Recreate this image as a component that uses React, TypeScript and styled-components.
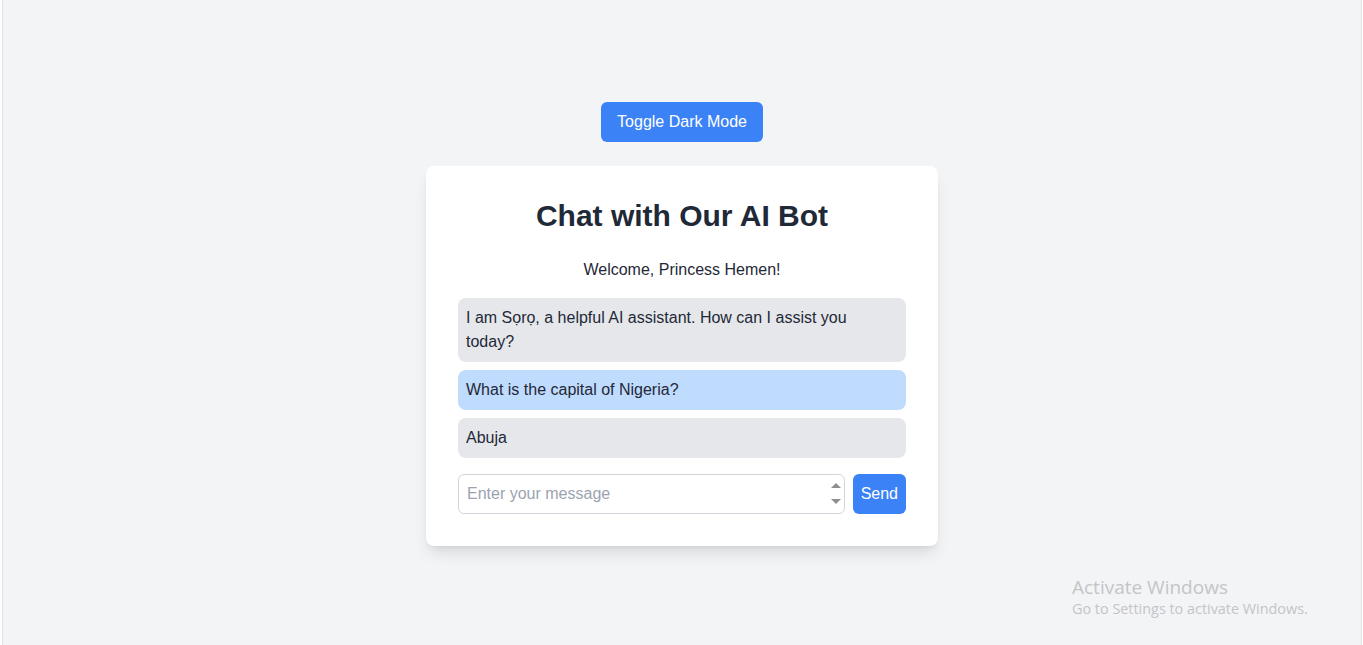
import React from "react";
import styled, { createGlobalStyle } from "styled-components";

const Global = createGlobalStyle`
  html, body { margin: 0; padding: 0; background: #ffffff; }
  body { font-family: "Liberation Sans", Arial, sans-serif; color: #1f2937; }
  * { box-sizing: border-box; }
`;

const Page = styled.div`
  position: relative;
  min-height: 645px;
  margin-left: 2px;
  width: 1360px;
  border-left: 1px solid #e2e3e6;
  border-right: 1px solid #e2e3e6;
  background: #f3f4f6;
  display: flex;
  flex-direction: column;
  align-items: center;
  justify-content: center;
  padding-top: 3px;
`;

const ToggleButton = styled.button`
  height: 40px;
  padding: 0 16px;
  border: none;
  border-radius: 6px;
  background: #3b82f6;
  color: #ffffff;
  font-family: inherit;
  font-size: 16px;
  margin-bottom: 24px;
  cursor: pointer;
`;

const Card = styled.div`
  width: 512px;
  background: #ffffff;
  border-radius: 8px;
  padding: 32px;
  box-shadow: 0 10px 15px -3px rgba(0, 0, 0, 0.1), 0 4px 6px -4px rgba(0, 0, 0, 0.1);
`;

const Title = styled.h1`
  margin: 0 0 24px;
  font-size: 30px;
  line-height: 36px;
  font-weight: 700;
  text-align: center;
  color: #1f2937;
`;

const Welcome = styled.p`
  margin: 0 0 16px;
  font-size: 16px;
  line-height: 24px;
  text-align: center;
  color: #1f2937;
`;

const Messages = styled.div`
  display: flex;
  flex-direction: column;
  gap: 8px;
`;

const Bubble = styled.div<{ $user?: boolean }>`
  padding: 8px;
  border-radius: 8px;
  font-size: 16px;
  line-height: 24px;
  color: #1f2937;
  background: ${(p) => (p.$user ? "#bfdbfe" : "#e5e7eb")};
`;

const InputRow = styled.div`
  display: flex;
  gap: 8px;
  margin-top: 16px;
`;

const InputWrap = styled.div`
  position: relative;
  flex: 1;
`;

const Input = styled.input`
  width: 100%;
  height: 40px;
  padding: 8px;
  border: 1px solid #d1d5db;
  border-radius: 6px;
  font-family: inherit;
  font-size: 16px;
  color: #1f2937;
  outline: none;
  &::placeholder { color: #9ca3af; }
`;

const Spinner = styled.div`
  position: absolute;
  right: 4px;
  top: 9px;
  display: flex;
  flex-direction: column;
  gap: 11px;
`;

const Arrow = styled.span<{ $down?: boolean }>`
  width: 0;
  height: 0;
  border-left: 5px solid transparent;
  border-right: 5px solid transparent;
  ${(p) =>
    p.$down
      ? "border-top: 5px solid #8e8e8e;"
      : "border-bottom: 5px solid #8e8e8e;"}
`;

const SendButton = styled.button`
  height: 40px;
  padding: 0 8px;
  border: none;
  border-radius: 6px;
  background: #3b82f6;
  color: #ffffff;
  font-family: inherit;
  font-size: 16px;
  cursor: pointer;
`;

const Watermark = styled.div`
  position: absolute;
  left: 1069px;
  top: 578px;
  font-family: "Open Sans", "Noto Sans", sans-serif;
  color: #c3c5c8;
  line-height: 1;
`;

const WmTitle = styled.div`
  font-size: 19px;
  margin-bottom: 5px;
`;

const WmSub = styled.div`
  font-size: 14.4px;
`;

export default function App() {
  return (
    <>
      <Global />
      <Page>
        <ToggleButton>Toggle Dark Mode</ToggleButton>
        <Card>
          <Title>Chat with Our AI Bot</Title>
          <Welcome>Welcome, Princess Hemen!</Welcome>
          <Messages>
            <Bubble>I am Sọrọ, a helpful AI assistant. How can I assist you today?</Bubble>
            <Bubble $user>What is the capital of Nigeria?</Bubble>
            <Bubble>Abuja</Bubble>
          </Messages>
          <InputRow>
            <InputWrap>
              <Input placeholder="Enter your message" />
              <Spinner>
                <Arrow />
                <Arrow $down />
              </Spinner>
            </InputWrap>
            <SendButton>Send</SendButton>
          </InputRow>
        </Card>
        <Watermark>
          <WmTitle>Activate Windows</WmTitle>
          <WmSub>Go to Settings to activate Windows.</WmSub>
        </Watermark>
      </Page>
    </>
  );
}
